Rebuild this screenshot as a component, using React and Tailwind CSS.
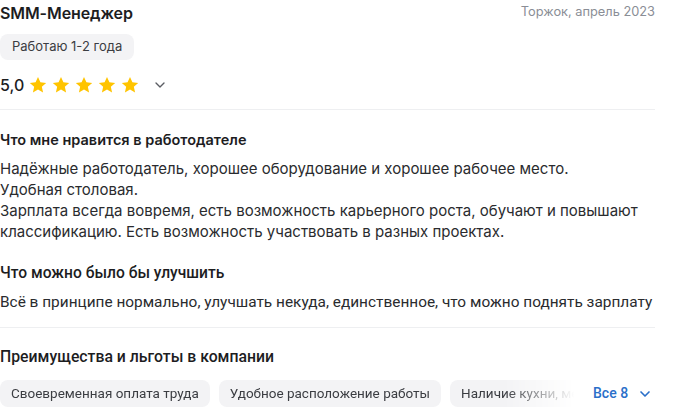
import { ChevronDown } from 'lucide-react';

// Карточка отзыва о работодателе

const BENEFITS = [
  'Своевременная оплата труда',
  'Удобное расположение работы',
  'Наличие кухни, места для отдыха',
];

function Star() {
  return (
    <svg viewBox="0 0 24 24" className="w-[20px] h-[20px]" fill="#ffc400">
      <path d="M12 2.5l2.9 6.3 6.9.7-5.2 4.6 1.5 6.8L12 17.4l-6.1 3.5 1.5-6.8L2.2 9.5l6.9-.7z" />
    </svg>
  );
}

export default function App() {
  return (
    <div className="w-[700px] h-[417px] bg-white overflow-hidden text-[#1d1d1f]">
      <div className="w-[655px] pt-[2px]">
        {/* ====== ШАПКА ====== */}
        <div className="font-['Inter',sans-serif]">
          <div className="flex items-start justify-between">
            <h1 className="text-[16px] font-semibold leading-[22px] tracking-[-0.1px]">SMM-Менеджер</h1>
            <span className="text-[12.8px] text-[#8a8e96] leading-[18px] mt-[1px]">Торжок, апрель 2023</span>
          </div>
          <div className="mt-[10px] inline-flex items-center h-[26px] px-[12px] rounded-[8px] bg-[#f3f3f5] text-[13px] text-[#3b3d42]">
            Работаю 1-2 года
          </div>
          <div className="mt-[14px] flex items-center">
            <span className="text-[16px] font-medium leading-[22px] mr-[4px]">5,0</span>
            <div className="flex items-center gap-[3px]">
              <Star /><Star /><Star /><Star /><Star />
            </div>
            <ChevronDown className="w-[16px] h-[16px] ml-[12px] text-[#5a5d63]" strokeWidth={2} />
          </div>
          <div className="mt-[13px] border-t border-[#eeeff1]" />

          {/* ====== ПЛЮСЫ ====== */}
          <h2 className="mt-[20px] text-[14.5px] font-semibold leading-[20px]">Что мне нравится в работодателе</h2>
          <p className="mt-[8px] text-[15px] leading-[21px] text-[#2a2b2e]">
            Надёжные работодатель, хорошее оборудование и хорошее рабочее место.<br />
            Удобная столовая.<br />
            Зарплата всегда вовремя, есть возможность карьерного роста, обучают и повышают<br />
            классификацию. Есть возможность участвовать в разных проектах.
          </p>
        </div>

        {/* ====== МИНУСЫ И ЛЬГОТЫ ====== */}
        <div className="font-['Roboto',sans-serif]">
          <h2 className="mt-[21px] text-[15.6px] font-medium leading-[20px]">Что можно было бы улучшить</h2>
          <p className="mt-[9px] text-[15.4px] leading-[21px] text-[#2a2b2e]">
            Всё в принципе нормально, улучшать некуда, единственное, что можно поднять зарплату
          </p>
          <div className="mt-[14px] border-t border-[#eeeff1]" />
          <h2 className="mt-[19px] text-[15.8px] font-medium leading-[20px]">Преимущества и льготы в компании</h2>
          <div className="mt-[13px] flex items-center">
            <div className="flex gap-[9px] w-[586px] overflow-hidden [mask-image:linear-gradient(to_right,black_86%,transparent_98%)]">
              {BENEFITS.map((b) => (
                <span
                  key={b}
                  className="shrink-0 h-[27px] px-[11px] flex items-center rounded-[8px] bg-[#f3f3f5] text-[13.5px] text-[#3b3d42] whitespace-nowrap"
                >
                  {b}
                </span>
              ))}
            </div>
            <button className="ml-[7px] flex items-center text-[14px] font-medium text-[#2a6fc9]">
              Все 8
              <ChevronDown className="w-[16px] h-[16px] ml-[9px]" strokeWidth={2.5} />
            </button>
          </div>
        </div>
      </div>
    </div>
  );
}
